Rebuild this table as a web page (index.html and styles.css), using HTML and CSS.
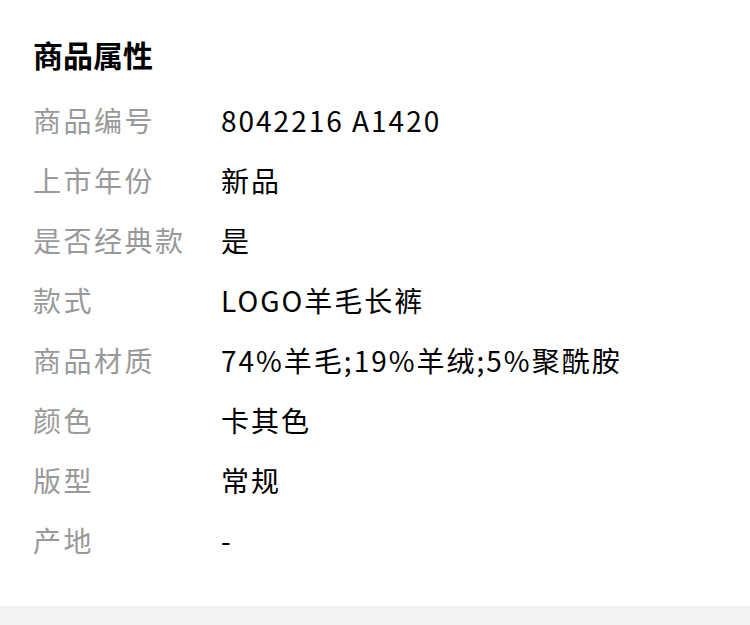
FILE: index.html
```html
<!DOCTYPE html>
<html lang="zh-CN">
<head>
    <meta charset="UTF-8">
    <title>商品属性</title>
    <link rel="stylesheet" href="styles.css">
</head>
<body>
    <div class="attr">
        <h2 class="attr-title">商品属性</h2>
        <ul class="attr-list">
            <li class="attr-row"><span class="attr-name">商品编号</span><span class="attr-value">8042216 A1420</span></li>
            <li class="attr-row"><span class="attr-name">上市年份</span><span class="attr-value">新品</span></li>
            <li class="attr-row"><span class="attr-name">是否经典款</span><span class="attr-value">是</span></li>
            <li class="attr-row"><span class="attr-name">款式</span><span class="attr-value">LOGO羊毛长裤</span></li>
            <li class="attr-row"><span class="attr-name">商品材质</span><span class="attr-value">74%羊毛;19%羊绒;5%聚酰胺</span></li>
            <li class="attr-row"><span class="attr-name">颜色</span><span class="attr-value">卡其色</span></li>
            <li class="attr-row"><span class="attr-name">版型</span><span class="attr-value">常规</span></li>
            <li class="attr-row"><span class="attr-name">产地</span><span class="attr-value">-</span></li>
        </ul>
    </div>
    <div class="gap"></div>
</body>
</html>
```

FILE: styles.css
```css
body {
    margin: 0;
    background: #fff;
    font-family: "Noto Sans CJK SC", "Noto Sans", sans-serif;
}

.attr {
    padding: 24px 33px 36px;
}

.attr-title {
    margin: 0 0 6px;
    font-size: 30px;
    line-height: 60px;
    font-weight: 700;
    color: #000;
}

.attr-list {
    margin: 0;
    padding: 0;
    list-style: none;
}

.attr-row {
    display: flex;
    height: 60px;
    align-items: center;
    font-size: 28px;
    letter-spacing: 2px;
}

.attr-name {
    width: 188px;
    flex-shrink: 0;
    color: #999;
    letter-spacing: 2.5px;
}

.attr-value {
    color: #000;
}

.gap {
    height: 19px;
    background: #f2f2f2;
}
```
